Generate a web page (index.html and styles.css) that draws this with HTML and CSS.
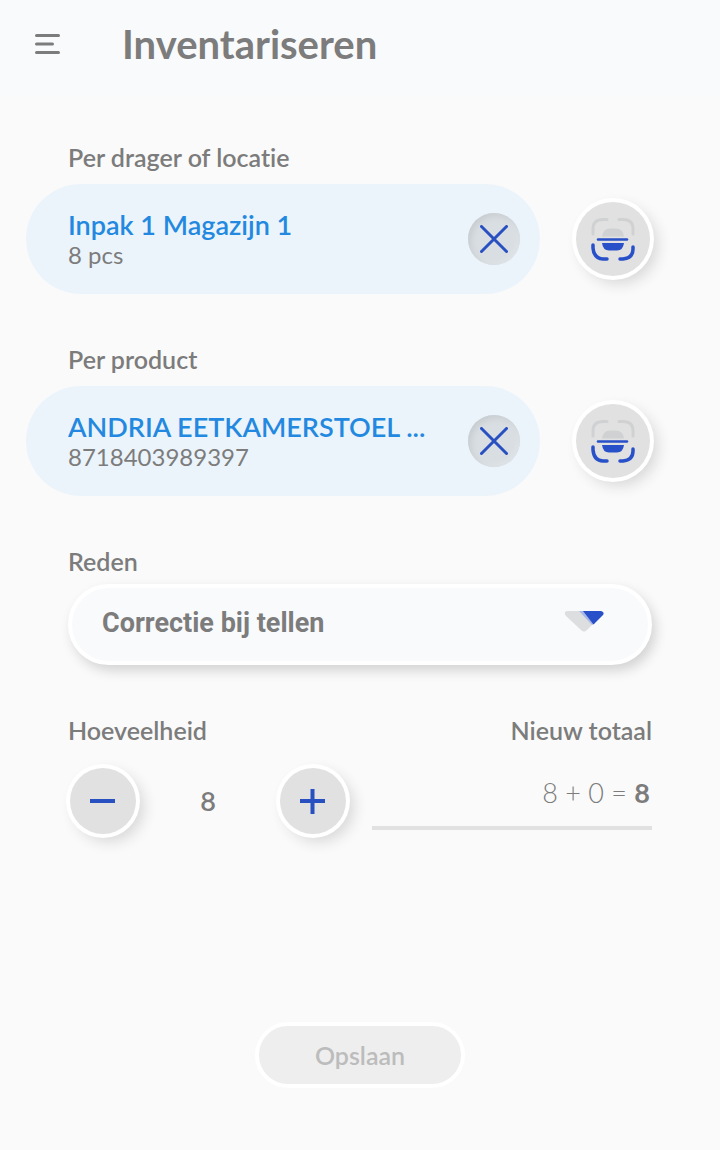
FILE: index.html
```html
<!DOCTYPE html>
<html lang="nl">

<head>
    <meta charset="UTF-8">
    <meta name="viewport" content="width=device-width, initial-scale=1.0">
    <title>Inventariseren</title>
    <link rel="stylesheet" href="styles.css">
</head>

<body>
    <!-- Shared icon -->
    <svg class="sprite" aria-hidden="true">
        <symbol id="scan" viewBox="0 0 44 44">
            <g fill="none" stroke="#d0d1d2" stroke-width="3" stroke-linecap="round">
                <path d="M2 17V12Q2 2.500 12 2.500H16" />
                <path d="M28 2.500H32Q42 2.500 42 12V17" />
            </g>
            <path d="M11 19.500Q12 11.500 19 11.500H25Q32 11.500 33 19.500Z" fill="#d0d1d2" />
            <g fill="none" stroke="#2850c8" stroke-width="3.500" stroke-linecap="round">
                <path d="M2 28V31Q3 41.500 12 42H16" />
                <path d="M29 42H32Q42 41 42 32V30" />
            </g>
            <path d="M7 22.500H36" stroke="#2850c8" stroke-width="2.500" stroke-linecap="round" />
            <path d="M11 26H33Q32 33.500 26 33.500H18Q12 33.500 11 26Z" fill="#2850c8" />
        </symbol>
    </svg>

    <header>
        <button type="button" class="menu" aria-label="Menu">
            <svg width="26" height="22" viewBox="0 0 26 22">
                <path d="M2.500 2.500H24.500M2.500 11H18.500M2.500 19.500H24.500" stroke="#7c7c7c" stroke-width="3" stroke-linecap="round" />
            </svg>
        </button>
        <h1>Inventariseren</h1>
    </header>

    <form>
        <section class="field">
            <h2>Per drager of locatie</h2>
            <div class="row">
                <div class="pill">
                    <div class="info">
                        <p class="name">Inpak 1 Magazijn 1</p>
                        <p class="detail">8 pcs</p>
                    </div>
                    <button type="button" class="clear" aria-label="Locatie wissen">
                        <svg width="28" height="28" viewBox="0 0 28 28">
                            <path d="M1.500 1.500L26.500 26.500M26.500 1.500L1.500 26.500" stroke="#2850c0" stroke-width="3" stroke-linecap="round" />
                        </svg>
                    </button>
                </div>
                <button type="button" class="round scan" aria-label="Locatie scannen">
                    <svg width="44" height="44"><use href="#scan" /></svg>
                </button>
            </div>
        </section>

        <section class="field">
            <h2>Per product</h2>
            <div class="row">
                <div class="pill">
                    <div class="info">
                        <p class="name">ANDRIA EETKAMERSTOEL ...</p>
                        <p class="detail">8718403989397</p>
                    </div>
                    <button type="button" class="clear" aria-label="Product wissen">
                        <svg width="28" height="28" viewBox="0 0 28 28">
                            <path d="M1.500 1.500L26.500 26.500M26.500 1.500L1.500 26.500" stroke="#2850c0" stroke-width="3" stroke-linecap="round" />
                        </svg>
                    </button>
                </div>
                <button type="button" class="round scan" aria-label="Product scannen">
                    <svg width="44" height="44"><use href="#scan" /></svg>
                </button>
            </div>
        </section>

        <section class="reason">
            <label for="reason">Reden</label>
            <div class="select">
                <select id="reason" name="reason">
                    <option>Correctie bij tellen</option>
                </select>
                <svg class="arrow" width="40" height="24" viewBox="0 0 40 24">
                    <path d="M3 1H37Q41 2 38 5L23 20Q20 23 17 20L2 6Q-1 2 3 1Z" fill="#dddee0" />
                    <path d="M15 1H22L31 13L28 15Z" fill="#a9b8e6" />
                    <path d="M19 1H37Q41 2 39 5L29.500 14.500Z" fill="#2850c8" />
                </svg>
            </div>
        </section>

        <section class="amounts">
            <div>
                <label for="quantity">Hoeveelheid</label>
                <div class="stepper">
                    <button type="button" class="round" aria-label="Minder">
                        <svg width="26" height="26" viewBox="0 0 26 26">
                            <path d="M0 13H25" stroke="#2850c0" stroke-width="4" />
                        </svg>
                    </button>
                    <input type="text" id="quantity" name="quantity" value="8" inputmode="numeric">
                    <button type="button" class="round" aria-label="Meer">
                        <svg width="26" height="26" viewBox="0 0 26 26">
                            <path d="M0 13H25M12.500 1V26" stroke="#2850c0" stroke-width="4" />
                        </svg>
                    </button>
                </div>
            </div>
            <div class="total">
                <h2>Nieuw totaal</h2>
                <p>8 + 0 = <strong>8</strong></p>
            </div>
        </section>

        <button type="submit" class="save" disabled>Opslaan</button>
    </form>
</body>

</html>
```

FILE: styles.css
```css
* {
    box-sizing: border-box;
}

body {
    margin: 0;
    font-family: Lato, sans-serif;
    font-variant-ligatures: none;
    color: #7c7c7c;
    background-color: #fafafa;
}

h1, h2, p {
    margin: 0;
}

button {
    display: flex;
    align-items: center;
    justify-content: center;
    padding: 0;
    border: none;
    cursor: pointer;
}

.sprite {
    position: absolute;
    width: 0;
    height: 0;
}

header {
    display: flex;
    align-items: center;
    height: 96px;
    padding: 0 34px 8px;
    background-color: #f9fafc;
}

.menu {
    margin-right: 62px;
    background: none;
}

h1 {
    font-size: 40px;
    font-weight: 700;
    line-height: 48px;
}

form {
    display: flex;
    flex-direction: column;
    padding: 47px 0 62px;
}

h2, label {
    display: block;
    font-size: 25px;
    font-weight: 600;
    line-height: 28px;
}

.field {
    padding: 0 66px 0 26px;
    margin-bottom: 51px;
}

.field h2 {
    padding-left: 42px;
    margin-bottom: 13px;
}

.row {
    display: flex;
    align-items: center;
    gap: 36px;
    padding-right: 4px;
}

.pill {
    flex: 1;
    min-width: 0;
    display: flex;
    align-items: center;
    height: 110px;
    padding: 0 20px 0 42px;
    border-radius: 55px;
    background-color: #ecf4fb;
}

.info {
    flex: 1;
    min-width: 0;
}

.name {
    font-size: 27px;
    font-weight: 600;
    line-height: 32px;
    color: #2389e0;
    overflow: hidden;
    text-overflow: ellipsis;
    white-space: nowrap;
}

.detail {
    font-size: 24px;
    line-height: 28px;
}

.clear {
    flex: none;
    width: 52px;
    height: 52px;
    border-radius: 50%;
    background-color: #d9dee2;
    box-shadow: inset 3px 3px 6px #c8cdd1, inset -2px -2px 5px #e0e5e9;
}

/* white ring, soft shadow at the bottom right */
.round {
    flex: none;
    width: 66px;
    height: 66px;
    border-radius: 50%;
    background-color: #e1e1e1;
    box-shadow: 0 0 0 4px #fff, 6px 6px 14px 2px #d8d8d8;
}

.scan {
    width: 74px;
    height: 74px;
}

.reason {
    padding: 0 68px;
    margin-bottom: 51px;
}

.select {
    position: relative;
    margin-top: 9px;
}

select {
    appearance: none;
    width: 100%;
    height: 81px;
    padding: 0 90px 4px 30px;
    border: 4px solid #fff;
    border-radius: 41px;
    font-family: Roboto, sans-serif;
    font-size: 27px;
    font-weight: 700;
    color: #7c7c7c;
    background-color: #f9fafc;
    box-shadow: 4px 6px 12px #d4d4d4;
}

.arrow {
    position: absolute;
    top: 26px;
    right: 48px;
    pointer-events: none;
}

.amounts {
    display: grid;
    grid-template-columns: 1fr 1fr;
    column-gap: 24px;
    padding: 0 68px;
}

.stepper {
    display: flex;
    align-items: center;
    justify-content: space-between;
    padding: 24px 2px 0;
}

.stepper input {
    width: 80px;
    padding: 0;
    border: none;
    font: 600 27px/32px Lato, sans-serif;
    text-align: center;
    color: #7c7c7c;
    background: none;
}

.total {
    text-align: right;
}

.total p {
    padding: 32px 2px 16px 0;
    border-bottom: 4px solid #e1e1e1;
    font-size: 27px;
    font-weight: 300;
    line-height: 34px;
}

.total strong {
    font-weight: 700;
}

.save {
    align-self: center;
    width: 210px;
    height: 66px;
    margin-top: 188px;
    border: 4px solid #fff;
    border-radius: 33px;
    font: 600 25px/28px Lato, sans-serif;
    color: #bcbcbc;
    background-color: #eee;
}
```
